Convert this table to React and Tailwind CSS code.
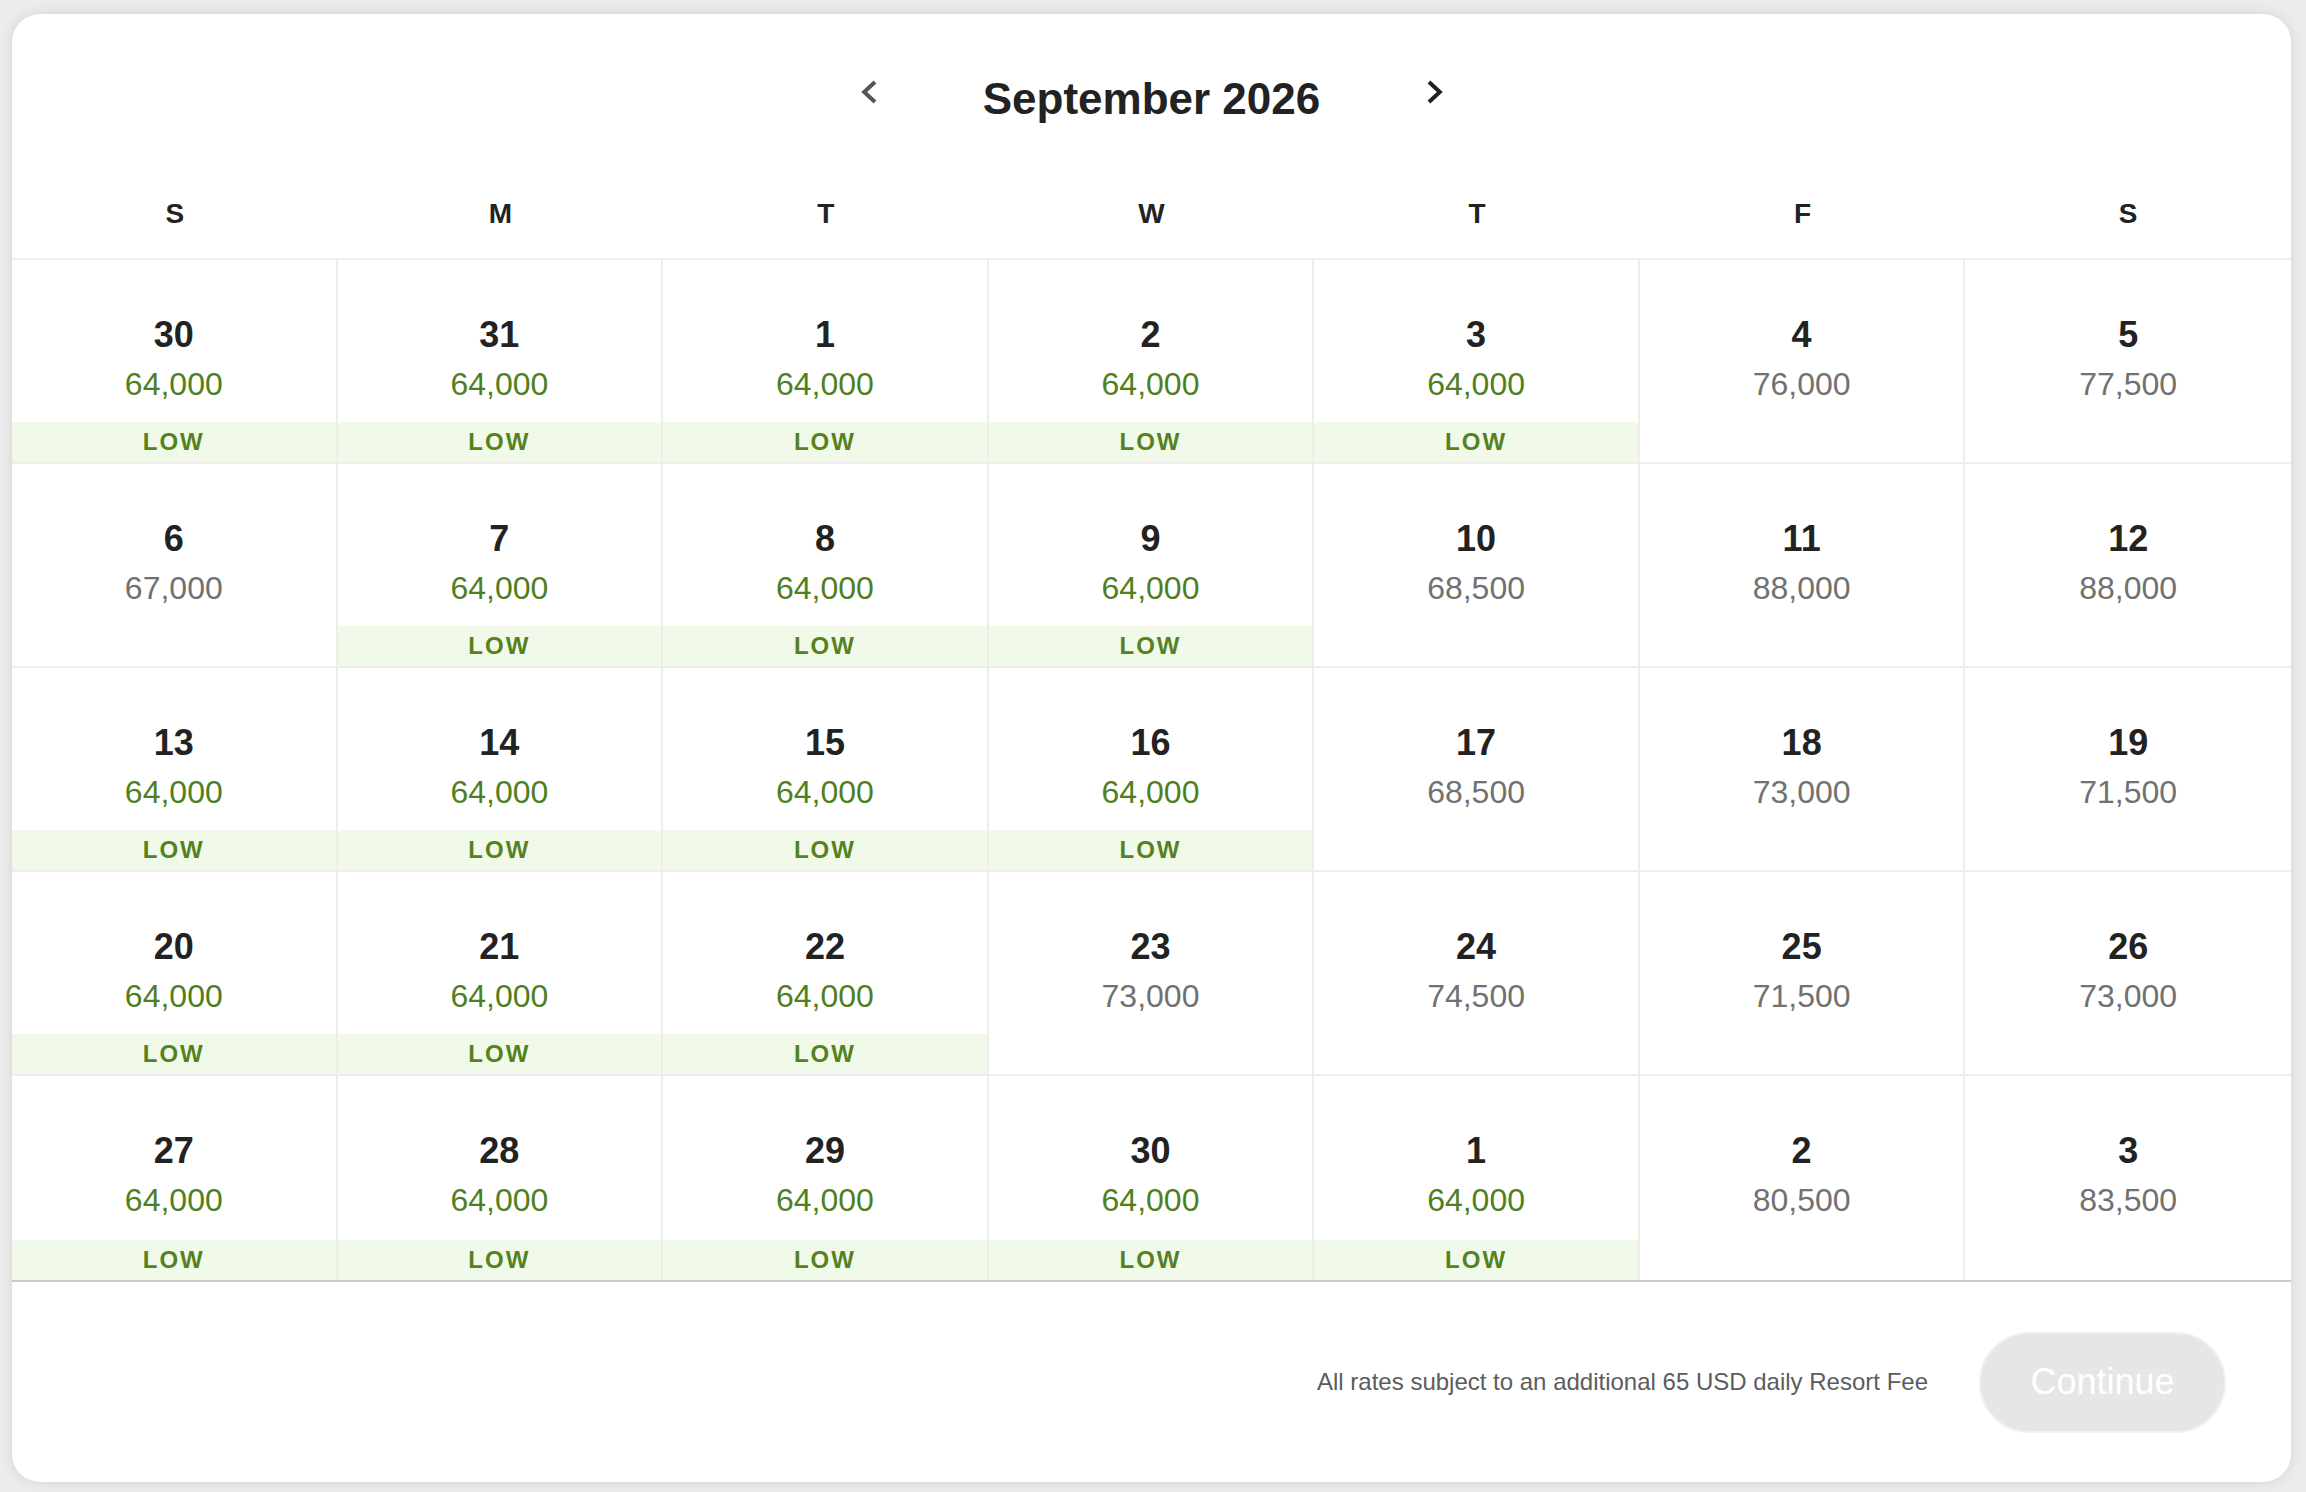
import React from 'react';

const weekdays = ['S', 'M', 'T', 'W', 'T', 'F', 'S'];

// [day, price, isLow]
const weeks = [
    [[30, '64,000', true], [31, '64,000', true], [1, '64,000', true], [2, '64,000', true], [3, '64,000', true], [4, '76,000', false], [5, '77,500', false]],
    [[6, '67,000', false], [7, '64,000', true], [8, '64,000', true], [9, '64,000', true], [10, '68,500', false], [11, '88,000', false], [12, '88,000', false]],
    [[13, '64,000', true], [14, '64,000', true], [15, '64,000', true], [16, '64,000', true], [17, '68,500', false], [18, '73,000', false], [19, '71,500', false]],
    [[20, '64,000', true], [21, '64,000', true], [22, '64,000', true], [23, '73,000', false], [24, '74,500', false], [25, '71,500', false], [26, '73,000', false]],
    [[27, '64,000', true], [28, '64,000', true], [29, '64,000', true], [30, '64,000', true], [1, '64,000', true], [2, '80,500', false], [3, '83,500', false]],
];

function Chevron({ dir, color }) {
    return (
        <svg width="17" height="24" viewBox="0 0 17 24" className="mt-[3px] shrink-0">
            <path
                d={dir === 'left' ? 'M14 2 L3.2 12 L14 22' : 'M3 2 L13.8 12 L3 22'}
                fill="none"
                stroke={color}
                strokeWidth="4"
                strokeLinejoin="miter"
            />
        </svg>
    );
}

function DayCell({ day, price, low, lastCol, lastRow }) {
    return (
        <div
            className={
                'flex flex-col items-center h-[204px] pt-[57px] ' +
                (lastRow ? '' : 'border-b-2 border-b-[#ededed] ') +
                (lastCol ? '' : 'border-r-2 border-r-[#ededed]')
            }
        >
            <div className="text-[36px] leading-[36px] font-bold text-[#222222]">{day}</div>
            <div className={'mt-[15px] text-[32px] leading-[32px] ' + (low ? 'text-[#4f7f1e]' : 'text-[#717171]')}>
                {price}
            </div>
            {low && (
                <div className="mt-auto w-full h-[40px] bg-[#f1fae8] flex items-center justify-center text-[24px] leading-[24px] font-bold tracking-[2px] text-[#548222]">
                    LOW
                </div>
            )}
        </div>
    );
}

export default function App() {
    return (
        <div className="min-h-screen bg-[#ececec] pl-[12px] pr-[15px] pt-[14px] pb-[12px] font-['Liberation_Sans',Arial,sans-serif]">
            <div className="bg-white rounded-[28px] overflow-hidden shadow-[0_0_14px_rgba(0,0,0,0.10)]">
                {/* Month header */}
                <div className="pt-[63px] flex justify-center items-start">
                    <Chevron dir="left" color="#555555" />
                    <div className="w-[548px] text-center text-[44px] leading-[44px] font-bold text-[#222222]">
                        September 2026
                    </div>
                    <Chevron dir="right" color="#222222" />
                </div>

                <div className="grid grid-cols-7 mt-[79px] pb-[30px] border-b-2 border-[#ededed]">
                    {weekdays.map((d, i) => (
                        <div key={i} className="text-center text-[28px] leading-[28px] font-bold text-[#222222]">
                            {d}
                        </div>
                    ))}
                </div>

                {/* Calendar grid */}
                <div className="grid grid-cols-7">
                    {weeks.map((week, r) =>
                        week.map(([day, price, low], c) => (
                            <DayCell
                                key={r + '-' + c}
                                day={day}
                                price={price}
                                low={low}
                                lastCol={c === 6}
                                lastRow={r === 4}
                            />
                        ))
                    )}
                </div>

                {/* Footer */}
                <div className="h-[202px] border-t-2 border-[#c9c9c9] flex items-center justify-end pr-[65px]">
                    <p className="text-[24px] leading-[24px] text-[#5c5c5c]">
                        All rates subject to an additional 65 USD daily Resort Fee
                    </p>
                    <button className="ml-[51px] w-[247px] h-[101px] rounded-full bg-[#e6e6e6] border-2 border-[#f0f0f0] text-white text-[36px] leading-[36px]">
                        Continue
                    </button>
                </div>
            </div>
        </div>
    );
}
